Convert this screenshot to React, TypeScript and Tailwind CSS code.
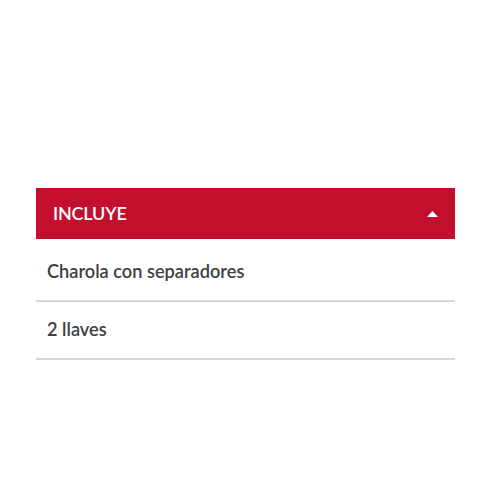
export default function App() {
  const items = ["Charola con separadores", "2 llaves"];

  return (
    <div className="w-[500px] h-[500px] bg-white pt-[188px] pl-[36px] font-['Lato','Liberation_Sans',sans-serif]">
      <div className="w-[419px]">
        <div className="h-[51px] bg-[#c30e2e] flex items-center justify-between pl-[17px] pr-[17px]">
          <span className="text-white text-[18px] font-semibold tracking-[-0.2px]">INCLUYE</span>
          <svg width="11" height="6" viewBox="0 0 11 6">
            <path d="M0 6 L5.5 0 L11 6 Z" fill="white" />
          </svg>
        </div>
        {items.map((item, i) => (
          <div
            key={item}
            className={`flex items-center pl-[11px] border-b-2 border-[#d6d6d6] text-[18.2px] font-semibold text-[#404040] ${
              i === 0 ? "h-[63px] pt-[5px]" : "h-[58px]"
            }`}
          >
            {item}
          </div>
        ))}
      </div>
    </div>
  );
}
